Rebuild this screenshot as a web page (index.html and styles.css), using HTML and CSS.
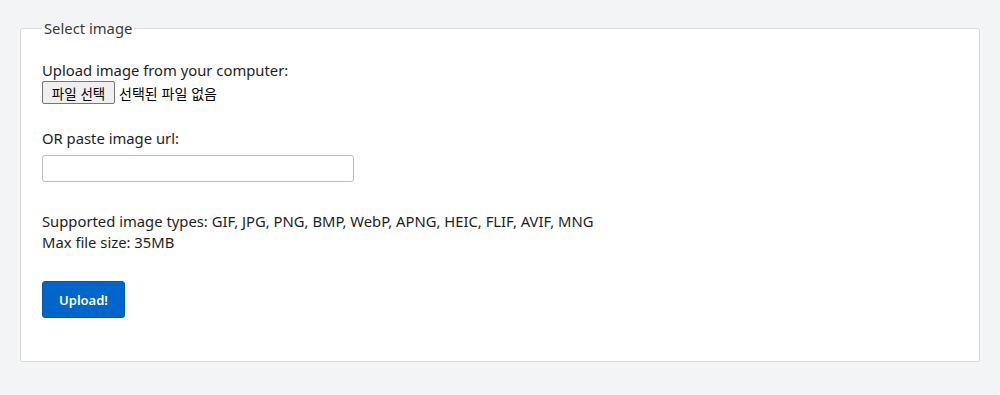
FILE: index.html
```html
<!DOCTYPE html>
<html lang="ko">
<head>
<meta charset="utf-8">
<title>Select image</title>
<link rel="stylesheet" href="styles.css">
</head>
<body>
<div class="panel">
  <fieldset class="box">
    <legend class="legend">Select image</legend>
    <div class="group first">
      <div class="label">Upload image from your computer:</div>
      <div class="file-row">
        <span class="file-btn">파일 선택</span>
        <span class="file-name">선택된 파일 없음</span>
      </div>
    </div>
    <div class="group url">
      <div class="label">OR paste image url:</div>
      <input class="url-input" type="text">
    </div>
    <div class="info">
      <div class="line">Supported image types: GIF, JPG, PNG, BMP, WebP, APNG, HEIC, FLIF, AVIF, MNG</div>
      <div class="line">Max file size: 35MB</div>
    </div>
    <div class="actions">
      <button class="upload" type="button">Upload!</button>
    </div>
  </fieldset>
</div>
</body>
</html>
```

FILE: styles.css
```css
html, body {
  margin: 0;
  padding: 0;
  background: #ffffff;
}
body {
  font-family: "Noto Sans", "Noto Sans CJK KR", sans-serif;
  font-size: 14.8px;
  color: #1e1e1e;
}
.panel {
  width: 1000px;
  height: 395px;
  box-sizing: border-box;
  background: #f3f4f6;
  border-radius: 0 0 4px 0;
  padding: 18px 20px 0 20px;
}
.box {
  margin: 0;
  border: 1px solid #dcdcdc;
  border-radius: 2px;
  background: #ffffff;
  padding: 0 20px 43px 21px;
}
.legend {
  padding: 0 2px;
  line-height: 20px;
  font-size: 14.8px;
  color: #3a3a3a;
}
.label {
  line-height: 21px;
}
.group.first {
  margin-top: 22px;
}
.file-row {
  display: flex;
  align-items: center;
  height: 23px;
}
.file-btn {
  box-sizing: border-box;
  height: 23px;
  width: 73px;
  display: flex;
  align-items: center;
  justify-content: center;
  background: #efefef;
  border: 1px solid #767676;
  border-radius: 2px;
  font-family: "Noto Sans CJK KR", sans-serif;
  font-size: 13.5px;
  color: #000;
}
.file-name {
  margin-left: 4px;
  font-family: "Noto Sans CJK KR", sans-serif;
  font-size: 14px;
  color: #000;
}
.group.url {
  margin-top: 24px;
}
.url-input {
  display: block;
  margin-top: 6px;
  box-sizing: border-box;
  width: 312px;
  height: 27px;
  border: 1px solid #bdbdbd;
  border-radius: 3px;
  background: #fff;
  padding: 0 6px;
}
.info {
  margin-top: 29px;
}
.line {
  line-height: 21px;
}
.actions {
  margin-top: 28px;
}
.upload {
  box-sizing: border-box;
  width: 83px;
  height: 37px;
  background: #0066cc;
  border: 1px solid #0059b3;
  border-radius: 3px;
  color: #ffffff;
  font-family: "Noto Sans", sans-serif;
  font-weight: 600;
  font-size: 13px;
  padding: 0;
}
```
